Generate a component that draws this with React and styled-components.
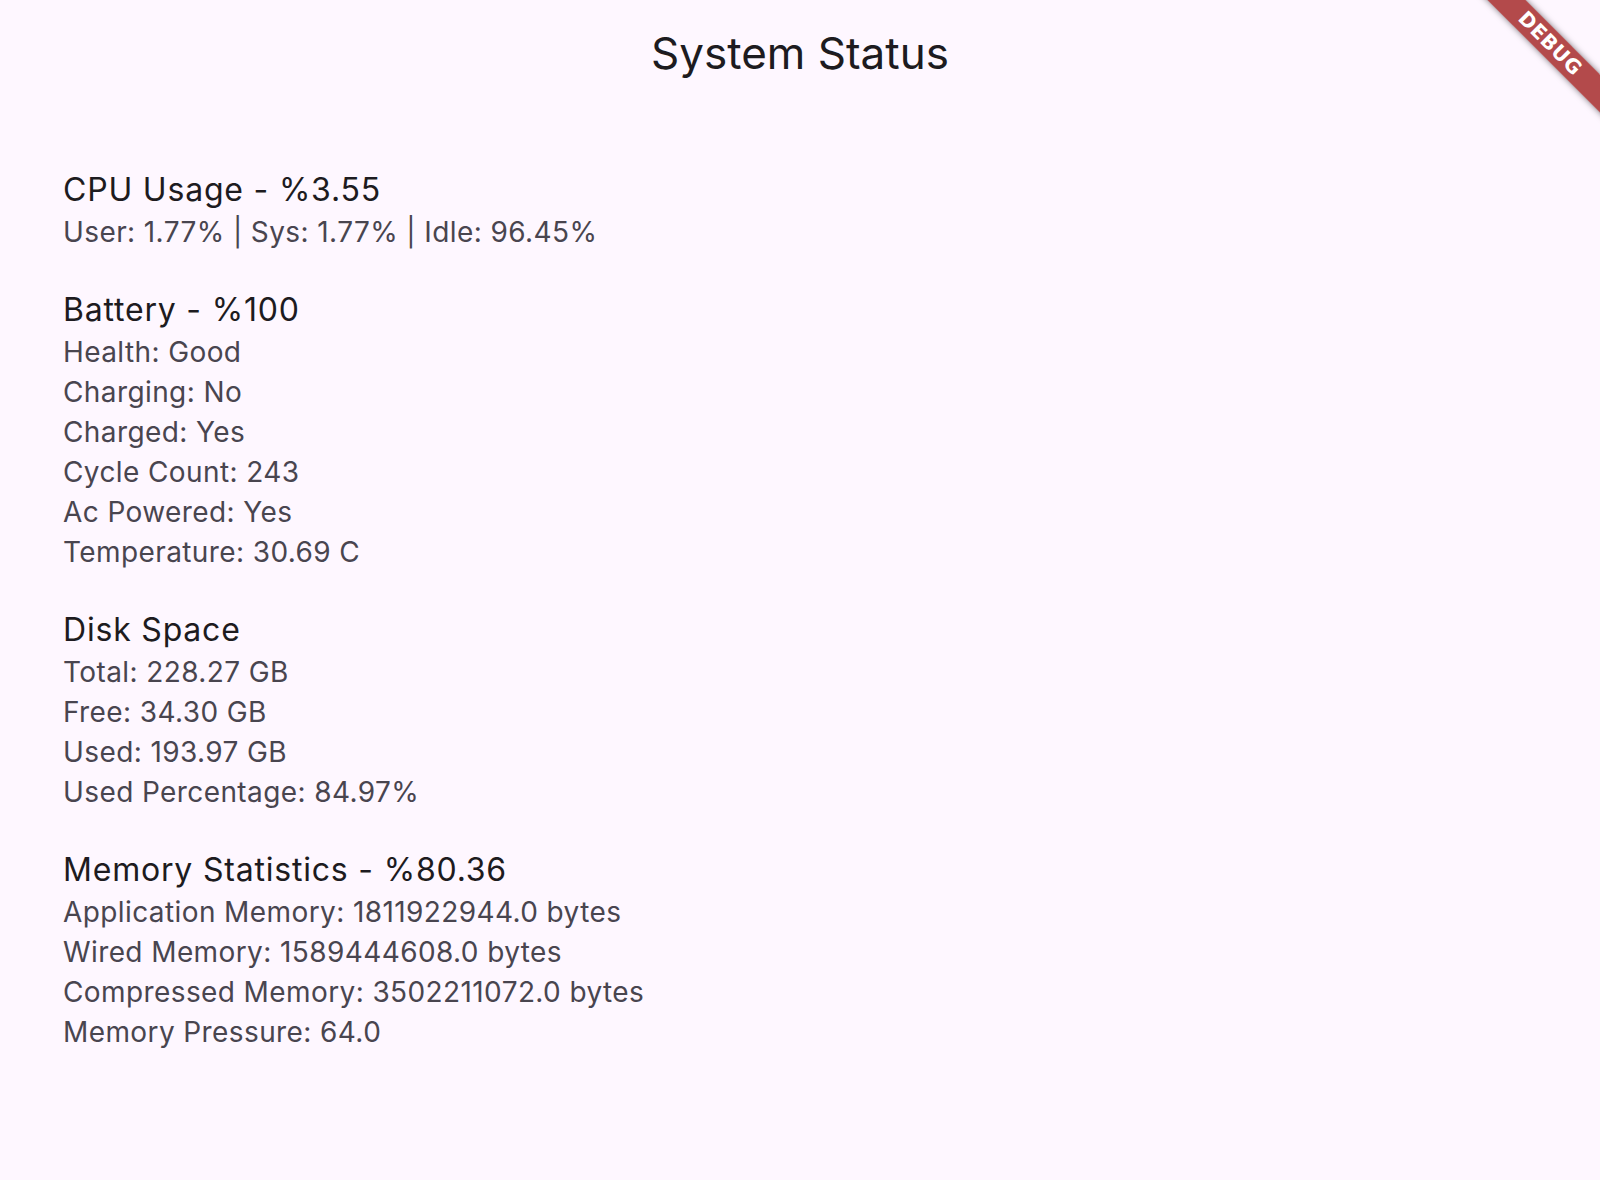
import React from 'react';
import styled, { createGlobalStyle } from 'styled-components';

const sections = [
  {
    title: 'CPU Usage - %3.55',
    lines: ['User: 1.77% | Sys: 1.77% | Idle: 96.45%'],
  },
  {
    title: 'Battery - %100',
    lines: [
      'Health: Good',
      'Charging: No',
      'Charged: Yes',
      'Cycle Count: 243',
      'Ac Powered: Yes',
      'Temperature: 30.69 C',
    ],
  },
  {
    title: 'Disk Space',
    lines: [
      'Total: 228.27 GB',
      'Free: 34.30 GB',
      'Used: 193.97 GB',
      'Used Percentage: 84.97%',
    ],
  },
  {
    title: 'Memory Statistics - %80.36',
    lines: [
      'Application Memory: 1811922944.0 bytes',
      'Wired Memory: 1589444608.0 bytes',
      'Compressed Memory: 3502211072.0 bytes',
      'Memory Pressure: 64.0',
    ],
  },
];

export default function App() {
  return (
    <Page>
      <GlobalStyle />
      <AppBar>
        <Title>System Status</Title>
      </AppBar>
      <Content>
        {sections.map((s) => (
          <Section key={s.title}>
            <Heading>{s.title}</Heading>
            {s.lines.map((l) => (
              <Line key={l}>{l}</Line>
            ))}
          </Section>
        ))}
      </Content>
      <BannerClip>
        <Ribbon>DEBUG</Ribbon>
      </BannerClip>
    </Page>
  );
}

const GlobalStyle = createGlobalStyle`
  html, body {
    margin: 0;
    padding: 0;
    background: #fef7ff;
  }
  body {
    font-family: Inter, "Noto Sans", "Liberation Sans", sans-serif;
  }
`;

const Page = styled.div`
  position: relative;
  width: 1600px;
  height: 1180px;
  overflow: hidden;
  background: #fef7ff;
`;

const AppBar = styled.header`
  height: 106px;
  display: flex;
  align-items: center;
  justify-content: center;
`;

const Title = styled.h1`
  margin: 0;
  font-size: 44px;
  line-height: 56px;
  font-weight: 400;
  color: #1d1b20;
`;

const Content = styled.main`
  padding: 60px 63px 0;
  display: flex;
  flex-direction: column;
  gap: 34px;
`;

const Section = styled.section`
  display: flex;
  flex-direction: column;
`;

const Heading = styled.div`
  padding-top: 2px;
  font-size: 32px;
  line-height: 44px;
  font-weight: 400;
  letter-spacing: 0.8px;
  color: #1d1b20;
`;

const Line = styled.div`
  font-size: 28px;
  line-height: 40px;
  font-weight: 400;
  letter-spacing: 0.4px;
  color: #49454f;
`;

const BannerClip = styled.div`
  position: absolute;
  top: 0;
  right: 0;
  width: 130px;
  height: 130px;
  overflow: hidden;
  pointer-events: none;
`;

const Ribbon = styled.div`
  position: absolute;
  left: -20px;
  top: 30px;
  width: 200px;
  height: 27px;
  transform: rotate(45deg);
  background: rgba(160, 30, 30, 0.8);
  box-shadow: 0 0 6px rgba(0, 0, 0, 0.5);
  color: #fff;
  font-family: "DejaVu Sans", "Liberation Sans", sans-serif;
  font-weight: 700;
  font-size: 20px;
  line-height: 27px;
  letter-spacing: 0.5px;
  text-align: center;
`;
